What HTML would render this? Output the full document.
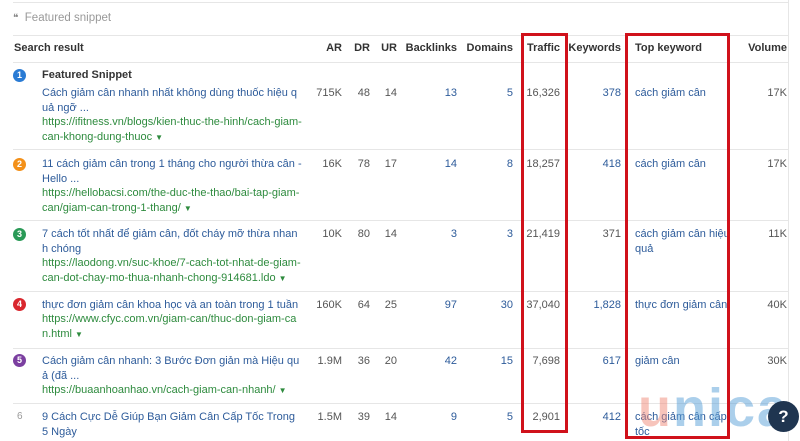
<!DOCTYPE html>
<html><head><meta charset="utf-8"><style>
*{margin:0;padding:0;box-sizing:border-box}
body{width:800px;height:441px;overflow:hidden;background:#fff;font-family:"Liberation Sans",Arial,sans-serif;font-size:11px;color:#333;position:relative}
.a{position:absolute;white-space:nowrap;line-height:14.5px}
.hl{position:absolute;left:13px;width:775px;height:1px;background:#e6e6e6}
.h{font-weight:bold;color:#333}
.t{color:#2d5b9a}
.u{color:#2e8b3e}
.n{color:#2d5b9a}
.g{color:#555}
.r{text-align:right}
.c{position:absolute;width:13px;height:13px;border-radius:50%;color:#fff;font-size:9px;font-weight:bold;text-align:center;line-height:13px;left:13px}
.box{position:absolute;border:3px solid #d0111b}
.ar{left:300px;width:42px}.dr{left:340px;width:30px}.ur{left:370px;width:27px}.bl{left:400px;width:57px}.dm{left:460px;width:53px}.tr{left:515px;width:45px}.kw{left:565px;width:56px}.vo{left:740px;width:47px}
</style></head><body>
<div style="position:absolute;left:788px;top:0;width:1px;height:441px;background:#e6e6e6"></div>
<div class="hl" style="top:2px"></div>
<div class="a" style="left:13px;top:11px;color:#999;font-size:11.5px"><span style="font-size:10px;color:#888">❝</span>&nbsp; Featured snippet</div>
<div class="hl" style="top:35px"></div>
<div class="a h" style="left:14px;top:41px">Search result</div>
<div class="a h r ar" style="top:41px">AR</div>
<div class="a h r dr" style="top:41px">DR</div>
<div class="a h r ur" style="top:41px">UR</div>
<div class="a h r bl" style="top:41px">Backlinks</div>
<div class="a h r dm" style="top:41px">Domains</div>
<div class="a h r tr" style="top:41px">Traffic</div>
<div class="a h r kw" style="top:41px">Keywords</div>
<div class="a h" style="left:635px;top:41px">Top keyword</div>
<div class="a h r vo" style="top:41px">Volume</div>
<div class="hl" style="top:62px"></div>

<!-- row1 -->
<div class="c" style="top:69px;background:#2a7bd4">1</div>
<div class="a h" style="left:42px;top:68px">Featured Snippet</div>
<div class="a t" style="left:42px;top:86px">Cách giảm cân nhanh nhất không dùng thuốc hiệu q<br>uả ngỡ ...</div>
<div class="a u" style="left:42px;top:115px">https://ifitness.vn/blogs/kien-thuc-the-hinh/cach-giam-<br>can-khong-dung-thuoc <span style="font-size:8px">▼</span></div>
<div class="a g r ar" style="top:86px">715K</div>
<div class="a g r dr" style="top:86px">48</div>
<div class="a g r ur" style="top:86px">14</div>
<div class="a n r bl" style="top:86px">13</div>
<div class="a n r dm" style="top:86px">5</div>
<div class="a g r tr" style="top:86px">16,326</div>
<div class="a n r kw" style="top:86px">378</div>
<div class="a t" style="left:635px;top:86px">cách giảm cân</div>
<div class="a g r vo" style="top:86px">17K</div>
<div class="hl" style="top:149px"></div>

<!-- row2 -->
<div class="c" style="top:158px;background:#f39019">2</div>
<div class="a t" style="left:42px;top:157px">11 cách giảm cân trong 1 tháng cho người thừa cân -<br>Hello ...</div>
<div class="a u" style="left:42px;top:186px">https://hellobacsi.com/the-duc-the-thao/bai-tap-giam-<br>can/giam-can-trong-1-thang/ <span style="font-size:8px">▼</span></div>
<div class="a g r ar" style="top:157px">16K</div>
<div class="a g r dr" style="top:157px">78</div>
<div class="a g r ur" style="top:157px">17</div>
<div class="a n r bl" style="top:157px">14</div>
<div class="a n r dm" style="top:157px">8</div>
<div class="a g r tr" style="top:157px">18,257</div>
<div class="a n r kw" style="top:157px">418</div>
<div class="a t" style="left:635px;top:157px">cách giảm cân</div>
<div class="a g r vo" style="top:157px">17K</div>
<div class="hl" style="top:220px"></div>

<!-- row3 -->
<div class="c" style="top:228px;background:#2a9a57">3</div>
<div class="a t" style="left:42px;top:227px">7 cách tốt nhất để giảm cân, đốt cháy mỡ thừa nhan<br>h chóng</div>
<div class="a u" style="left:42px;top:256px">https://laodong.vn/suc-khoe/7-cach-tot-nhat-de-giam-<br>can-dot-chay-mo-thua-nhanh-chong-914681.ldo <span style="font-size:8px">▼</span></div>
<div class="a g r ar" style="top:227px">10K</div>
<div class="a g r dr" style="top:227px">80</div>
<div class="a g r ur" style="top:227px">14</div>
<div class="a n r bl" style="top:227px">3</div>
<div class="a n r dm" style="top:227px">3</div>
<div class="a g r tr" style="top:227px">21,419</div>
<div class="a g r kw" style="top:227px">371</div>
<div class="a t" style="left:635px;top:227px">cách giảm cân hiệu<br>quả</div>
<div class="a g r vo" style="top:227px">11K</div>
<div class="hl" style="top:291px"></div>

<!-- row4 -->
<div class="c" style="top:298px;background:#d9272e">4</div>
<div class="a t" style="left:42px;top:298px">thực đơn giảm cân khoa học và an toàn trong 1 tuần</div>
<div class="a u" style="left:42px;top:312px">https://www.cfyc.com.vn/giam-can/thuc-don-giam-ca<br>n.html <span style="font-size:8px">▼</span></div>
<div class="a g r ar" style="top:298px">160K</div>
<div class="a g r dr" style="top:298px">64</div>
<div class="a g r ur" style="top:298px">25</div>
<div class="a n r bl" style="top:298px">97</div>
<div class="a n r dm" style="top:298px">30</div>
<div class="a g r tr" style="top:298px">37,040</div>
<div class="a n r kw" style="top:298px">1,828</div>
<div class="a t" style="left:635px;top:298px">thực đơn giảm cân</div>
<div class="a g r vo" style="top:298px">40K</div>
<div class="hl" style="top:348px"></div>

<!-- row5 -->
<div class="c" style="top:354px;background:#7b3fa0">5</div>
<div class="a t" style="left:42px;top:354px">Cách giảm cân nhanh: 3 Bước Đơn giản mà Hiệu qu<br>ả (đã ...</div>
<div class="a u" style="left:42px;top:383px">https://buaanhoanhao.vn/cach-giam-can-nhanh/ <span style="font-size:8px">▼</span></div>
<div class="a g r ar" style="top:354px">1.9M</div>
<div class="a g r dr" style="top:354px">36</div>
<div class="a g r ur" style="top:354px">20</div>
<div class="a n r bl" style="top:354px">42</div>
<div class="a n r dm" style="top:354px">15</div>
<div class="a g r tr" style="top:354px">7,698</div>
<div class="a n r kw" style="top:354px">617</div>
<div class="a t" style="left:635px;top:354px">giảm cân</div>
<div class="a g r vo" style="top:354px">30K</div>
<div class="hl" style="top:403px"></div>

<!-- row6 -->
<div class="a" style="left:17px;top:410px;color:#999;font-size:10px">6</div>
<div class="a t" style="left:42px;top:410px">9 Cách Cực Dễ Giúp Bạn Giảm Cân Cấp Tốc Trong<br>5 Ngày</div>
<div class="a g r ar" style="top:410px">1.5M</div>
<div class="a g r dr" style="top:410px">39</div>
<div class="a g r ur" style="top:410px">14</div>
<div class="a n r bl" style="top:410px">9</div>
<div class="a n r dm" style="top:410px">5</div>
<div class="a g r tr" style="top:410px">2,901</div>
<div class="a n r kw" style="top:410px">412</div>
<div class="a t" style="left:635px;top:410px">cách giảm cân cấp<br>tốc</div>

<!-- unica watermark -->
<div class="a" style="left:638px;top:380px;font-size:54px;line-height:56px;font-weight:bold;letter-spacing:2px;opacity:.5"><span style="color:#f08a7a">u</span><span style="color:#5aa0d8">nica</span></div>
<div style="position:absolute;left:768px;top:401px;width:31px;height:31px;border-radius:50%;background:#1f3550;color:#fff;font-weight:bold;font-size:17px;text-align:center;line-height:31px">?</div>

<div class="box" style="left:521px;top:33px;width:47px;height:400px"></div>
<div class="box" style="left:625px;top:33px;width:105px;height:406px"></div>
</body></html>
